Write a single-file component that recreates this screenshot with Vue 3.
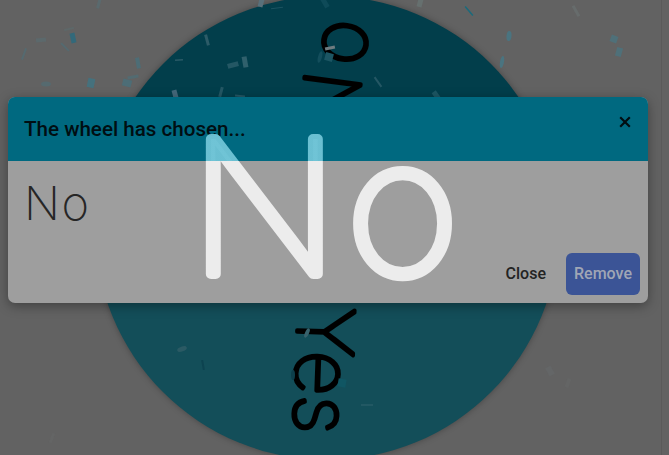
<script setup>
const confetti = [
  { x: 73, y: 38, w: 5, h: 10, r: -12, c: '#33697a' },
  { x: 99, y: 3, w: 3, h: 11, r: 15, c: '#5a6a6e' },
  { x: 69, y: 29, w: 10, h: 2, r: -15, c: '#5e6869' },
  { x: 41, y: 40, w: 10, h: 4, r: -5, c: '#5c696c' },
  { x: 65, y: 47, w: 11, h: 2, r: 45, c: '#556a70' },
  { x: 24, y: 54, w: 2, h: 12, r: 20, c: '#556a70' },
  { x: 138, y: 63, w: 4, h: 11, r: -10, c: '#4d6d76' },
  { x: 133, y: 77, w: 11, h: 3, r: -10, c: '#536b71' },
  { x: 127, y: 83, w: 9, h: 7, r: 15, c: '#4d6d76' },
  { x: 91, y: 83, w: 7, h: 9, r: 12, c: '#45717d' },
  { x: 46, y: 84, w: 10, h: 5, r: 0, c: '#566a6f', round: true },
  { x: 261, y: 3, w: 5, h: 8, r: 15, c: '#59707a' },
  { x: 207, y: 40, w: 3, h: 11, r: -15, c: '#2c5b67' },
  { x: 277, y: 8, w: 12, h: 1, r: -8, c: '#1c5361' },
  { x: 179, y: 60, w: 8, h: 1.5, r: -5, c: '#2a5a67' },
  { x: 233, y: 65, w: 11, h: 5, r: -15, c: '#245764' },
  { x: 245, y: 62, w: 5, h: 11, r: -10, c: '#30606c' },
  { x: 221, y: 92, w: 3, h: 10, r: 15, c: '#245764' },
  { x: 175, y: 94, w: 5, h: 8, r: -15, c: '#44687a' },
  { x: 240, y: 96, w: 10, h: 2, r: 5, c: '#245764' },
  { x: 330, y: 48, w: 10, h: 3, r: -12, c: '#6f7c80' },
  { x: 329, y: 57, w: 8, h: 8, r: 15, c: '#1c5663' },
  { x: 320, y: 57, w: 4, h: 12, r: 15, c: '#134e5c', round: true },
  { x: 325, y: 3, w: 5, h: 10, r: -30, c: '#0e4a58' },
  { x: 420, y: 3, w: 5, h: 8, r: 15, c: '#66706f' },
  { x: 469, y: 11, w: 1.5, h: 12, r: -40, c: '#1a6a7c' },
  { x: 378, y: 82, w: 2, h: 12, r: -35, c: '#245764' },
  { x: 436, y: 95, w: 5, h: 8, r: -35, c: '#1c5663' },
  { x: 509, y: 36, w: 5, h: 10, r: 5, c: '#4a7480', round: true },
  { x: 502, y: 62, w: 4, h: 12, r: 10, c: '#4a7480', round: true },
  { x: 576, y: 11, w: 3, h: 12, r: -30, c: '#676c6c' },
  { x: 614, y: 39, w: 7, h: 7, r: 20, c: '#4f7079' },
  { x: 619, y: 52, w: 6, h: 9, r: 15, c: '#4f7079' },
  { x: 182, y: 349, w: 10, h: 5, r: -20, c: '#2b5a64', round: true },
  { x: 203, y: 365, w: 2, h: 10, r: -10, c: '#0d4350' },
  { x: 307, y: 333, w: 4, h: 10, r: 25, c: '#38626c', round: true },
  { x: 293, y: 375, w: 4, h: 10, r: 0, c: '#0d3f4b', round: true },
  { x: 342, y: 383, w: 8, h: 8, r: 10, c: '#105663' },
  { x: 367, y: 405, w: 12, h: 1, r: 0, c: '#33636e' },
  { x: 52, y: 438, w: 3, h: 10, r: 20, c: '#646565' },
  { x: 550, y: 371, w: 6, h: 9, r: -30, c: '#646667' },
  { x: 568, y: 383, w: 4, h: 9, r: 20, c: '#646565' }
]
</script>

<template>
  <div class="page">
    <main class="stage">
      <svg class="wheel" viewBox="0 0 662 455" width="662" height="455">
        <g class="disc">
          <path d="M95 228 A232 232 0 0 1 559 228 Z" fill="#023e4b" />
          <path d="M95 228 A232 232 0 0 0 559 228 Z" fill="#134e59" />
        </g>
        <text class="label label-no" transform="translate(354 135) rotate(-82.5)">No</text>
        <text class="label" transform="translate(298 306) rotate(92)">Yes</text>
        <g v-for="(p, i) in confetti" :key="i" :transform="`translate(${p.x} ${p.y}) rotate(${p.r})`">
          <ellipse v-if="p.round" :rx="p.w / 2" :ry="p.h / 2" :fill="p.c" />
          <rect v-else :x="-p.w / 2" :y="-p.h / 2" :width="p.w" :height="p.h" :fill="p.c" />
        </g>
      </svg>
    </main>
    <aside class="rail"></aside>

    <section class="modal">
      <header class="modal-head">
        <h2 class="modal-title">The wheel has chosen...</h2>
        <svg class="close-icon" viewBox="0 0 14 14" width="14" height="14">
          <path d="M2.2 2.2 L11.8 11.8 M11.8 2.2 L2.2 11.8" />
        </svg>
      </header>
      <div class="modal-body">
        <p class="result">No</p>
      </div>
      <footer class="modal-foot">
        <button class="btn btn-plain" type="button">Close</button>
        <button class="btn btn-primary" type="button">Remove</button>
      </footer>
    </section>

    <svg class="winner" viewBox="0 0 669 455" width="669" height="455">
      <defs>
        <linearGradient id="winnerFill" gradientUnits="userSpaceOnUse" x1="0" y1="-274" x2="0" y2="181">
          <stop offset="0.3538" stop-color="#70c4d6" stop-opacity="0.95" />
          <stop offset="0.3538" stop-color="#ececec" />
        </linearGradient>
      </defs>
      <text class="winner-text" transform="translate(189 274) scale(1.05 1)">No</text>
    </svg>
  </div>
</template>

<style scoped>
.page {
  position: relative;
  display: flex;
  width: 669px;
  height: 455px;
  overflow: hidden;
  background: #626262;
  font-family: Roboto, "Liberation Sans", sans-serif;
}
.stage {
  flex: 1;
  min-width: 0;
}
.rail {
  flex: 0 0 7px;
  border-left: 1px solid #5a5a5a;
}
.wheel {
  display: block;
}
.disc {
  filter: drop-shadow(0 0 3px rgba(0, 0, 0, 0.3));
}
.label {
  font-family: Inter, sans-serif;
  font-weight: 100;
  font-size: 78px;
  fill: #000;
  stroke: #000;
  stroke-width: 4px;
  stroke-linejoin: round;
  stroke-linecap: round;
}
.label-no {
  letter-spacing: 8px;
}
.modal {
  position: absolute;
  left: 8px;
  top: 97px;
  width: 640px;
  height: 206px;
  display: flex;
  flex-direction: column;
  border-radius: 7px;
  overflow: hidden;
  background: #9e9e9e;
  box-shadow: 0 3px 12px rgba(0, 0, 0, 0.35);
}
.modal-head {
  flex: 0 0 64px;
  display: flex;
  align-items: flex-start;
  justify-content: space-between;
  padding: 18px 16px 0;
  box-sizing: border-box;
  background: #006980;
}
.modal-title {
  margin: 1px 0 0;
  font-size: 20.6px;
  line-height: 27px;
  font-weight: 500;
  color: #000e12;
}
.close-icon {
  fill: none;
  stroke: #000e12;
  stroke-width: 2.2;
}
.modal-body {
  flex: 1;
  padding: 14px 16px 0;
}
.result {
  margin: 0;
  font-family: Inter, sans-serif;
  font-weight: 200;
  font-size: 47px;
  letter-spacing: 1.5px;
  line-height: 56px;
  color: #262626;
}
.modal-foot {
  display: flex;
  justify-content: flex-end;
  align-items: center;
  gap: 8px;
  padding: 0 8px 8px;
}
.btn {
  height: 42px;
  padding-bottom: 2px;
  border: 0;
  border-radius: 6px;
  font-family: inherit;
  font-size: 16px;
  font-weight: 500;
}
.btn-plain {
  padding-left: 11px;
  padding-right: 12px;
  background: transparent;
  color: #232323;
}
.btn-primary {
  width: 74px;
  padding-left: 0;
  padding-right: 0;
  background: #3b5496;
  color: #a0a6b5;
}
.winner {
  position: absolute;
  left: 0;
  top: 0;
  pointer-events: none;
}
.winner-text {
  font-family: Inter, sans-serif;
  font-weight: 100;
  font-size: 186px;
  letter-spacing: 6px;
  fill: url(#winnerFill);
  stroke: url(#winnerFill);
  stroke-width: 10px;
  stroke-linejoin: round;
  stroke-linecap: round;
}
</style>
